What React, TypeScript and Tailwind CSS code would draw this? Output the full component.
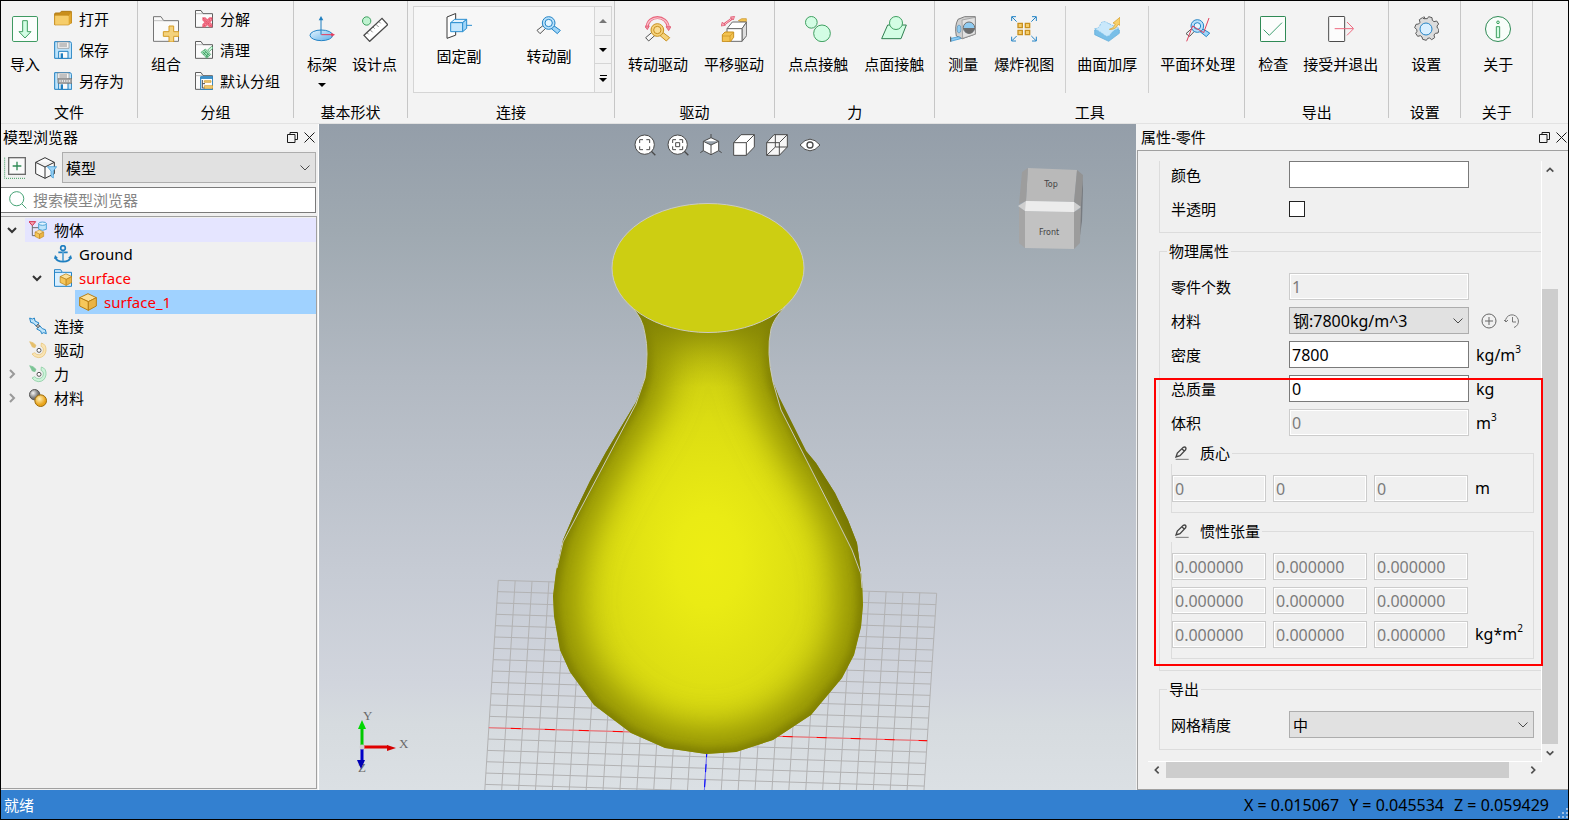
import { useState, type ReactNode } from "react";
import clsx from "clsx";

/* ---------- icons ---------- */

function Icon({ size = 78, className, children }: { size?: number; className: string; children: ReactNode }) {
  return (
    <svg viewBox={`0 0 ${size} ${size}`} className={clsx("shrink-0", className)} fill="none" strokeWidth={3} aria-hidden>
      {children}
    </svg>
  );
}

const BIG = "size-[26px]";
const SMALL = "size-[18px]";

function ImportIcon() {
  return (
    <Icon className={BIG}>
      <rect x="1.5" y="1.5" width="75" height="75" rx="4" fill="#fbfdfc" stroke="#3f9a62" />
      <path d="M32 14h14v33h11L39 66 21 47h11z" fill="#d3fde4" stroke="#3f9f60" />
    </Icon>
  );
}

function OpenIcon() {
  return (
    <Icon size={54} className={SMALL}>
      <path d="M2 44V12q0-3 3-3h12l5-5h28q3 0 3 3v32z" fill="#c98f1c" stroke="#b17b14" />
      <path d="M2 18q0-2 3-2h35q3 0 4 2l7-10v30l-7 7H4q-2 0-2-3z" fill="#f6cd6a" stroke="#c8901f" strokeWidth="2" />
      <path d="M44 18v27l8-7V8z" fill="#e0a62e" />
    </Icon>
  );
}

function Floppy({ children }: { children?: ReactNode }) {
  return (
    <Icon size={54} className={SMALL}>
      <path d="M2 2h47l4 5v45H2z" fill="#bde3fb" stroke="#1f7fc0" />
      <path d="M11 3h34v19H11z" fill="#f5f5f5" stroke="#8a8a8a" strokeWidth="2" />
      <path d="M16 9h23M16 15h23" stroke="#8d8d8d" />
      <path d="M14 31h28v21H14z" fill="#fafafa" stroke="#1f7fc0" />
      <path d="M20 37h7v14h-7z" fill="#1f7fc0" />
      {children}
    </Icon>
  );
}

function SaveAsIcon() {
  return (
    <Floppy>
      <path d="M12 20h42v14H12z" fill="#a9a9a9" stroke="#6b6b6b" strokeWidth="2" />
      <path d="M18 24v6M25 24v6M32 24v6M39 24v6M46 24v6" stroke="#efefef" />
    </Floppy>
  );
}

function GroupIcon() {
  return (
    <Icon className={BIG}>
      <path d="M1.5 76V2H24l8 12h44.5v62z" fill="#fafafa" stroke="#757575" />
      <path d="M2 14h30" stroke="#a8a8a8" strokeWidth="2" />
      <path d="M48 30h14v17h16v14H62v17H48V61H31V47h17z" fill="#f4d27c" stroke="#d39a24" />
    </Icon>
  );
}

function SmallFolder({ children }: { children: ReactNode }) {
  return (
    <Icon size={54} className={SMALL}>
      <path d="M1.5 52V1.5H18L24 11h28.5v41z" fill="#fbfbfb" stroke="#5e5e5e" />
      <path d="M2 11h22" stroke="#9c9c9c" strokeWidth="2" />
      {children}
    </Icon>
  );
}

function UngroupIcon() {
  return (
    <SmallFolder>
      <path d="M22 22h9l6 6 6-6h9v9l-6 6 6 6v9h-9l-6-6-6 6h-9v-9l6-6-6-6z" fill="#f0697f" />
      <path d="M27 26l21 21M48 26L27 47" stroke="#fbb3be" strokeDasharray="3 3" />
      <path d="M24 24l26 26M50 24L24 50" stroke="#d32f4c" strokeWidth="2" strokeDasharray="4 3" />
    </SmallFolder>
  );
}

function CleanIcon() {
  return (
    <SmallFolder>
      <path d="M50 16l4 5-11 11-5-5z" fill="#c9f4d8" stroke="#3f9f60" strokeWidth="2" />
      <path d="M31 24l16 16-11 12L18 34z" fill="#9be0b5" stroke="#3f9f60" strokeWidth="2" />
      <path d="M24 33l15 15M28 28l16 16M33 50l6-12M25 42l7-9" stroke="#2f8a52" strokeWidth="2" />
    </SmallFolder>
  );
}

function DefaultGroupIcon() {
  return (
    <SmallFolder>
      <path d="M17 14h36v38H17z" fill="#fff" stroke="#1f7fc0" />
      <path d="M17 18h36" stroke="#1f7fc0" strokeWidth="5" />
      <path d="M22 24v24M22 35h8M22 48h8" stroke="#4f4f4f" />
      <path d="M28 26h20v5H28zM28 41h26v8H28z" fill="#f4cf73" stroke="#c8901f" strokeWidth="2" />
    </SmallFolder>
  );
}

function FrameIcon() {
  return (
    <Icon className={BIG}>
      <defs>
        <linearGradient id="disc" x1="0" y1="0" x2="1" y2="1">
          <stop stopColor="#e6f5ff" />
          <stop offset="1" stopColor="#5fb0e8" />
        </linearGradient>
      </defs>
      <ellipse cx="37" cy="58" rx="34" ry="16" fill="url(#disc)" stroke="#2484c6" />
      <path d="M36 56V8" stroke="#1f7fc0" />
      <path d="M36 0l7 13H29z" fill="#1f7fc0" />
      <path d="M37 56h32" stroke="#e83a5a" />
      <path d="M78 56l-11-6v12z" fill="#e83a5a" />
    </Icon>
  );
}

function DesignPointIcon() {
  return (
    <Icon className={BIG}>
      <circle cx="14" cy="15" r="12.5" fill="#bff2d0" stroke="#3f9f60" />
      <path d="M6 58L60 7l17 19-54 50z" fill="#fff" stroke="#4a4a4a" strokeWidth="4" />
      <path d="M15 50l5 5M24 41l8 8M33 33l5 5M42 25l8 8M51 17l5 5" stroke="#4a4a4a" strokeWidth="2" />
    </Icon>
  );
}

function FixedJointIcon() {
  return (
    <Icon className={BIG}>
      <path d="M3 12L29 1.500v65L3 76z" fill="#fff" stroke="#3a3a3a" />
      <path d="M14 29l12-10h36L50 29z" fill="#e2f3ff" stroke="#2b8fd0" />
      <path d="M14 29h36v27H14z" fill="#c5e7fd" stroke="#2b8fd0" />
      <path d="M50 29l12-10v27L50 56z" fill="#9fd5f8" stroke="#2b8fd0" />
      <path d="M62 37h16" stroke="#2b8fd0" />
    </Icon>
  );
}

function RevoluteIcon() {
  return (
    <Icon className={BIG}>
      <path d="M22 37l8 8-18 17-9-10z" fill="#f7f7f7" stroke="#555" />
      <path d="M52 37l-8 8 20 17 9-10z" fill="#9fd5f8" stroke="#2484c6" />
      <circle cx="38" cy="30" r="19" fill="#b9e1fb" stroke="#2484c6" />
      <circle cx="38" cy="30" r="11" fill="#e5f5ff" stroke="#2484c6" />
    </Icon>
  );
}

function RotateDriveIcon() {
  return (
    <Icon className={BIG}>
      <path d="M6 36C7-6 67-6 70 36" stroke="#e8657c" strokeWidth="9" />
      <path d="M6 34C8-4 66-4 70 34" stroke="#fbc0ca" strokeWidth="4" />
      <path d="M-1 30h14l-6 11zM63 32h15l-7 12z" fill="#ef8a9b" stroke="#e04f69" strokeWidth="2" />
      <path d="M22 48l9 9-20 18-9-10z" fill="#f7f7f7" stroke="#555" />
      <path d="M52 48l-9 9 21 18 10-10z" fill="#f6d27a" stroke="#c8901f" />
      <circle cx="37" cy="42" r="19" fill="#f6d27a" stroke="#c8901f" />
      <circle cx="37" cy="42" r="11" fill="#f9dd95" stroke="#c8901f" />
    </Icon>
  );
}

function SlideDriveIcon() {
  return (
    <Icon className={BIG}>
      <path d="M52 14l10-6h14v9H60z" fill="#f2c24f" stroke="#c8901f" strokeWidth="2" />
      <path d="M18 38l16-20h43L63 38z" fill="#fff" stroke="#6a6a6a" />
      <path d="M63 38l14-20v41L63 76z" fill="#dedede" stroke="#6a6a6a" />
      <path d="M18 38h45v38H18z" fill="#fff" stroke="#6a6a6a" />
      <path d="M4 56l8-8h26v16l-10 13H4z" fill="#f2c24f" stroke="#c8901f" />
      <path d="M4 60h23v16M27 60l10-11" stroke="#c8901f" strokeWidth="2" />
      <path d="M8 26L34 7" stroke="#e04f69" strokeWidth="7" />
      <path d="M10 25L32 8" stroke="#fbc0ca" />
      <path d="M0 30l4-12 9 10zM41 1L28 3l9 9z" fill="#f5a3b1" stroke="#e04f69" strokeWidth="2" />
    </Icon>
  );
}

function PointPointIcon() {
  return (
    <Icon className={BIG}>
      <circle cx="19" cy="19" r="17.500" fill="#d3fde4" stroke="#3f9f60" />
      <circle cx="51" cy="52" r="25" fill="#d3fde4" stroke="#3f9f60" />
    </Icon>
  );
}

function PointFaceIcon() {
  return (
    <Icon className={BIG}>
      <path d="M20 27h56L60 68H2z" fill="#d3fde4" stroke="#2f7f4f" />
      <circle cx="45" cy="21" r="19.500" fill="#d3fde4" stroke="#3f9f60" />
    </Icon>
  );
}

function MeasureIcon() {
  return (
    <Icon className={BIG}>
      <path d="M24 10l20-8h32l1 52-40 14-18-8q-6-30 5-50z" fill="#cfcfcf" stroke="#7c7c7c" />
      <path d="M36 12l40-8v50L38 67z" fill="#e2e2e2" stroke="#8c8c8c" strokeWidth="2" />
      <circle cx="57" cy="35" r="17" fill="#8fcbf1" stroke="#6f6f6f" />
      <path d="M41 36h33q-2 16-17 17-14-2-16-17z" fill="#6d6d6d" />
      <ellipse cx="27" cy="39" rx="6" ry="12" fill="#8fcbf1" stroke="#5f8fb0" strokeWidth="2" />
      <path d="M2 76v-9l26-5 4 6z" fill="#8fcbf1" stroke="#2b8fd0" strokeWidth="2" />
      <path d="M2 62v15" stroke="#555" />
    </Icon>
  );
}

function ExplodeIcon() {
  return (
    <Icon className={BIG}>
      <path
        d="M17 17L3 3M61 17L75 3M17 60L3 74M61 60l14 14M2 15V2h13M63 2h13v13M2 62v13h13M63 75h13V62"
        stroke="#2484c6"
      />
      <path d="M21 22h13v13H21zM43 22h13v13H43zM21 43h13v13H21zM43 43h13v13H43z" fill="#f6cd6a" stroke="#c8901f" strokeWidth="4" />
    </Icon>
  );
}

function ThickenIcon() {
  return (
    <Icon className={BIG}>
      <path d="M2 42l40-20 34 20v10L44 76 2 56z" fill="#79bfe8" stroke="#5aa9d8" strokeWidth="2" />
      <path d="M2 38q14 0 18-16 4-6 14-5 22 12 42 20-18 4-28 20-6 6-14 2Q20 48 2 38z" fill="#c9e8fb" stroke="#6fb7e2" strokeWidth="2" strokeDasharray="6 3" />
      <path d="M46 40q14-2 18-16l-7-3L78 4v24l-6-3Q66 42 46 40z" fill="#f8d06a" stroke="#d39a24" strokeWidth="2" />
    </Icon>
  );
}

function PlaneLoopIcon() {
  return (
    <Icon className={BIG}>
      <path d="M20 38l8 8-14 15-11-8z" fill="#f2f2f2" stroke="#555" />
      <path d="M52 38l-8 8 20 16 10-11z" fill="#9fd5f8" stroke="#2484c6" />
      <circle cx="37" cy="30" r="19" fill="#b9e1fb" stroke="#2484c6" />
      <circle cx="37" cy="30" r="10" fill="#e5f5ff" stroke="#2484c6" />
      <path d="M5 76l18-46 33 20L72 6" stroke="#e0405c" />
    </Icon>
  );
}

function CheckIcon() {
  return (
    <Icon className={BIG}>
      <rect x="1.500" y="1.500" width="75" height="75" rx="2" fill="#fcfdfc" stroke="#2f8a55" />
      <path d="M11 41l17 17 38-38" stroke="#3f9f70" />
    </Icon>
  );
}

function AcceptIcon() {
  return (
    <Icon className={BIG}>
      <rect x="2" y="1.500" width="48" height="75" rx="2" fill="#fcfcfc" stroke="#4b4b4b" />
      <path d="M20 38h55M57 18l20 20-20 20" stroke="#ef6a80" strokeWidth="3" />
    </Icon>
  );
}

function GearIcon() {
  return (
    <Icon className={BIG}>
      <path
        d="M33 2l3 6h7l4-6 10 3 1 8 5 4 8-2 6 9-5 6 1 6 5 5-3 10-8 1-4 5 2 8-9 6-6-5-6 1-4 6-11-3-2-7-5-4-8 2-6-9 4-6-1-6-6-5 4-10 8-1 4-5-2-8 9-6 6 4z"
        fill="#dcdcdc"
        stroke="#5a5a5a"
        strokeLinejoin="round"
      />
      <circle cx="39" cy="39" r="18" fill="#d9efff" stroke="#2484c6" />
    </Icon>
  );
}

function AboutIcon() {
  return (
    <Icon className={BIG}>
      <circle cx="39" cy="39" r="37.500" fill="#f8fdfa" stroke="#2f8a55" />
      <circle cx="39" cy="19" r="4" fill="#d3fde4" stroke="#3f9f60" />
      <path d="M34 32h10v33H34z" fill="#d3fde4" stroke="#3f9f60" />
    </Icon>
  );
}

function FloatIcon() {
  return (
    <svg viewBox="0 0 11 11" className="size-[11px]" fill="none" stroke="#1a1a1a">
      <path d="M3 2.500V.5h7.500v7H8M.5 2.500H8v8H.5z" />
    </svg>
  );
}

function CloseIcon() {
  return (
    <svg viewBox="0 0 11 11" className="size-[11px]" fill="none" stroke="#1a1a1a">
      <path d="M.5.5l10 10M10.500.5l-10 10" />
    </svg>
  );
}

function Chevron({ dir, className }: { dir: "up" | "down" | "left" | "right"; className: string }) {
  const d = {
    up: "M2 8l4-4 4 4",
    down: "M2 4l4 4 4-4",
    left: "M8 2L4 6l4 4",
    right: "M4 2l4 4-4 4",
  }[dir];
  return (
    <svg viewBox="0 0 12 12" className={className} fill="none" stroke="currentColor" strokeWidth={2}>
      <path d={d} />
    </svg>
  );
}

function SelectArrow() {
  return (
    <svg viewBox="0 0 10 6" className="pointer-events-none absolute top-1/2 right-[6px] h-[6px] w-[10px] -translate-y-1/2" fill="none" stroke="#4a4a4a">
      <path d="M.5.5L5 5 9.500.5" />
    </svg>
  );
}

function PencilIcon() {
  return (
    <svg viewBox="0 0 42 42" className="size-[14px]" fill="none" stroke="#444" strokeWidth={4}>
      <path d="M3 33l4-12L25 4q5-3 8 2l-1 5-17 18zM21 9l8 7" />
      <path d="M2 40h39" stroke="#777" strokeWidth="3" />
    </svg>
  );
}

function Cube({ x = 0, y = 0, s = 1 }: { x?: number; y?: number; s?: number }) {
  return (
    <g transform={`translate(${x} ${y}) scale(${s})`} stroke="#b97f12" strokeLinejoin="round">
      <path d="M2 14L27 2l25 12-24 12z" fill="#fbe09a" />
      <path d="M2 14l26 12v26L2 39z" fill="#f6c75a" />
      <path d="M52 14L28 26v26l24-13z" fill="#eab445" />
    </g>
  );
}

function BodiesIcon() {
  return (
    <Icon size={54} className={SMALL}>
      <path d="M0 2h20L10 14z" fill="#f6a5b2" stroke="#d32f4c" />
      <path d="M10 14v30h10M10 20h20" stroke="#6b6b6b" />
      <path d="M29 8v17q11 6 23 0V8z" fill="#bfe4fa" stroke="#4fa3d8" />
      <ellipse cx="40.500" cy="8" rx="11.500" ry="5" fill="#e2f3ff" stroke="#4fa3d8" />
      <Cube x={17} y={26} s={0.52} />
    </Icon>
  );
}

function AnchorIcon() {
  return (
    <Icon size={54} className={SMALL}>
      <circle cx="27" cy="9" r="7" stroke="#1f7fc0" strokeWidth="5" />
      <path d="M27 16v34M13 22h28M4 36q3 14 23 14t23-14" stroke="#1f7fc0" strokeWidth="5" />
      <path d="M0 42l3-12 9 9zM54 42l-3-12-9 9z" fill="#1f7fc0" />
      <path d="M27 18v30" stroke="#bfe4fa" strokeWidth="2" />
    </Icon>
  );
}

function PartFolderIcon() {
  return (
    <Icon size={54} className={SMALL}>
      <path d="M1.500 52V2H20l5 8h27.500v42z" fill="#d9efff" stroke="#2484c6" />
      <path d="M2 10h22" stroke="#2484c6" />
      <Cube x={17} y={13} s={0.7} />
    </Icon>
  );
}

function PartIcon() {
  return (
    <Icon size={54} className={SMALL}>
      <Cube />
    </Icon>
  );
}

function JointsIcon() {
  return (
    <Icon size={54} className={SMALL}>
      <path d="M2 3l8 3 6-3 2 9 12 6-8 10-8-9-9-3z" fill="#bfe4fa" stroke="#2484c6" />
      <path d="M52 50l-8-3-6 3-3-8-12-6 9-10 8 9 9 3z" fill="#bfe4fa" stroke="#2484c6" />
      <circle cx="27" cy="27" r="4" fill="#fff" stroke="#555" />
    </Icon>
  );
}

function SwirlIcon({ fill, edge }: { fill: string; edge: string }) {
  return (
    <Icon size={54} className={SMALL}>
      <path d="M2 2l10 3 9 8-3 7-8-2z" fill={edge} stroke={edge} strokeWidth="2" />
      <path d="M37 6q16 4 14 24-4 20-23 20-12-1-19-11l8-4q6 8 15 6 12-4 11-17-1-6-7-8z" fill={fill} stroke={edge} strokeWidth="2" />
      <circle cx="30" cy="28" r="6" fill="#fff" stroke="#555" />
    </Icon>
  );
}

function MaterialIcon() {
  return (
    <Icon size={54} className={SMALL}>
      <defs>
        <radialGradient id="mat-grey" cx=".35" cy=".35">
          <stop stopColor="#f5f5f5" />
          <stop offset="1" stopColor="#6f6f6f" />
        </radialGradient>
        <radialGradient id="mat-gold" cx=".4" cy=".35">
          <stop stopColor="#fff0b8" />
          <stop offset="1" stopColor="#e9a51d" />
        </radialGradient>
      </defs>
      <circle cx="17" cy="17" r="15.500" fill="url(#mat-grey)" stroke="#555" />
      <circle cx="35" cy="35" r="17.500" fill="url(#mat-gold)" stroke="#9c6a08" />
    </Icon>
  );
}

/* ---------- ribbon ---------- */

interface Action {
  label: string;
  icon: ReactNode;
}

function BigButton({ label, icon, arrow }: Action & { arrow?: boolean }) {
  return (
    <button type="button" className="flex flex-col items-center self-start pt-[13px]">
      {icon}
      <span className="mt-[11px] leading-[22px] whitespace-nowrap">{label}</span>
      {arrow && <span className="mt-[8px] border-x-4 border-t-4 border-x-transparent border-t-black" />}
    </button>
  );
}

function SmallButtons({ items }: { items: Action[] }) {
  return (
    <div className="flex flex-col">
      {items.map((item) => (
        <button key={item.label} type="button" className="flex h-[31px] items-center gap-[7px] whitespace-nowrap">
          {item.icon}
          {item.label}
        </button>
      ))}
    </div>
  );
}

function RibbonGroup({ title, className, children }: { title: string; className: string; children: ReactNode }) {
  return (
    <section className="flex shrink-0">
      <div>
        <div className={clsx("flex h-[100px] pt-[2px]", className)}>{children}</div>
        <h2 className="text-center leading-[22px]">{title}</h2>
      </div>
      <div className="h-[117px] w-px bg-[#c6c6c6]" />
    </section>
  );
}

function InnerRule() {
  return <div className="-mx-[5px] mt-[3px] h-[87px] w-px bg-[#cfcfcf]" />;
}

function JointGallery() {
  return (
    <div className="mt-[3px] flex h-[87px] border border-[#d5d5d5] bg-[#f7f7f7]">
      {[
        { label: "固定副", icon: <FixedJointIcon /> },
        { label: "转动副", icon: <RevoluteIcon /> },
      ].map((j) => (
        <button key={j.label} type="button" className="flex w-[90px] flex-col items-center pt-[6px]">
          {j.icon}
          <span className="mt-[6px] leading-[22px]">{j.label}</span>
        </button>
      ))}
      <div className="flex w-[17px] flex-col divide-y divide-[#d5d5d5] border-l border-[#d5d5d5] bg-[#f3f3f3]">
        <button type="button" aria-label="上一行" className="flex flex-1 items-center justify-center">
          <span className="border-x-4 border-b-4 border-x-transparent border-b-[#777]" />
        </button>
        <button type="button" aria-label="下一行" className="flex flex-1 items-center justify-center">
          <span className="border-x-4 border-t-4 border-x-transparent border-t-black" />
        </button>
        <button type="button" aria-label="更多" className="flex flex-1 flex-col items-center justify-center gap-[2px]">
          <span className="h-px w-[7px] bg-black" />
          <span className="border-x-4 border-t-4 border-x-transparent border-t-black" />
        </button>
      </div>
    </div>
  );
}

function Ribbon() {
  return (
    <header className="flex h-[123px] overflow-hidden border-b border-[#e2e2e2] bg-[#f3f3f3]">
      <RibbonGroup title="文件" className="gap-[14px] pr-[13px] pl-[9px]">
        <BigButton label="导入" icon={<ImportIcon />} />
        <SmallButtons
          items={[
            { label: "打开", icon: <OpenIcon /> },
            { label: "保存", icon: <Floppy /> },
            { label: "另存为", icon: <SaveAsIcon /> },
          ]}
        />
      </RibbonGroup>
      <RibbonGroup title="分组" className="gap-[14px] px-[13px]">
        <BigButton label="组合" icon={<GroupIcon />} />
        <SmallButtons
          items={[
            { label: "分解", icon: <UngroupIcon /> },
            { label: "清理", icon: <CleanIcon /> },
            { label: "默认分组", icon: <DefaultGroupIcon /> },
          ]}
        />
      </RibbonGroup>
      <RibbonGroup title="基本形状" className="gap-[15px] pr-[10px] pl-[13px]">
        <BigButton label="标架" icon={<FrameIcon />} arrow />
        <BigButton label="设计点" icon={<DesignPointIcon />} />
      </RibbonGroup>
      <RibbonGroup title="连接" className="pr-[2px] pl-[5px]">
        <JointGallery />
      </RibbonGroup>
      <RibbonGroup title="驱动" className="gap-[16px] pr-[10px] pl-[13px]">
        <BigButton label="转动驱动" icon={<RotateDriveIcon />} />
        <BigButton label="平移驱动" icon={<SlideDriveIcon />} />
      </RibbonGroup>
      <RibbonGroup title="力" className="gap-[16px] pr-[10px] pl-[13px]">
        <BigButton label="点点接触" icon={<PointPointIcon />} />
        <BigButton label="点面接触" icon={<PointFaceIcon />} />
      </RibbonGroup>
      <RibbonGroup title="工具" className="gap-[16px] pr-[9px] pl-[13px]">
        <BigButton label="测量" icon={<MeasureIcon />} />
        <BigButton label="爆炸视图" icon={<ExplodeIcon />} />
        <InnerRule />
        <BigButton label="曲面加厚" icon={<ThickenIcon />} />
        <InnerRule />
        <BigButton label="平面环处理" icon={<PlaneLoopIcon />} />
      </RibbonGroup>
      <RibbonGroup title="导出" className="gap-[15px] pr-[10px] pl-[13px]">
        <BigButton label="检查" icon={<CheckIcon />} />
        <BigButton label="接受并退出" icon={<AcceptIcon />} />
      </RibbonGroup>
      <RibbonGroup title="设置" className="pr-[19px] pl-[22px]">
        <BigButton label="设置" icon={<GearIcon />} />
      </RibbonGroup>
      <RibbonGroup title="关于" className="pr-[19px] pl-[22px]">
        <BigButton label="关于" icon={<AboutIcon />} />
      </RibbonGroup>
    </header>
  );
}

/* ---------- model browser ---------- */

function PanelTitle({ title, className }: { title: string; className: string }) {
  return (
    <div className={clsx("flex h-[26px] shrink-0 items-center gap-[6px] bg-[#f3f3f3]", className)}>
      <h2 className="flex-1">{title}</h2>
      <button type="button" aria-label="浮动">
        <FloatIcon />
      </button>
      <button type="button" aria-label="关闭">
        <CloseIcon />
      </button>
    </div>
  );
}

interface TreeNode {
  label: string;
  icon: ReactNode;
  level: 0 | 1 | 2;
  open?: boolean;
  error?: boolean;
}

const TREE: TreeNode[] = [
  { label: "物体", icon: <BodiesIcon />, level: 0, open: true },
  { label: "Ground", icon: <AnchorIcon />, level: 1 },
  { label: "surface", icon: <PartFolderIcon />, level: 1, open: true, error: true },
  { label: "surface_1", icon: <PartIcon />, level: 2, error: true },
  { label: "连接", icon: <JointsIcon />, level: 0 },
  { label: "驱动", icon: <SwirlIcon fill="#f9e4b4" edge="#e5bf6c" />, level: 0 },
  { label: "力", icon: <SwirlIcon fill="#cdf3da" edge="#7cc596" />, level: 0, open: false },
  { label: "材料", icon: <MaterialIcon />, level: 0, open: false },
];

const INDENT = ["pl-0", "pl-[25px]", "pl-[50px]"];

function ModelBrowser() {
  const [selected, setSelected] = useState("surface_1");

  return (
    <aside className="flex w-[318px] shrink-0 flex-col border-r border-white bg-[#f0f0f0] pb-px">
      <PanelTitle title="模型浏览器" className="pr-[3px] pl-[2px]" />
      <div className="mt-[2px] mr-[2px] flex h-[31px] shrink-0 items-center">
        <button type="button" aria-label="添加" className="ml-[3px]">
          <svg viewBox="0 0 66 66" className="size-[22px]" fill="none" strokeWidth={3}>
            <path d="M2 2v62h64" stroke="#3f9f60" strokeDasharray="3 3" />
            <rect x="14" y="2" width="50" height="50" fill="#fafafa" stroke="#6b6b6b" strokeWidth="4" />
            <path d="M39 14v26M26 27h26" stroke="#2f8a55" strokeWidth="4" />
          </svg>
        </button>
        <button type="button" aria-label="过滤" className="mr-[5px] ml-[9px]">
          <svg viewBox="0 0 66 66" className="size-[22px]" fill="none" strokeWidth={3}>
            <path d="M2 16L30 2l28 14v34L30 64 2 50zM2 16l28 14 28-14M30 30v34" fill="#fafafa" stroke="#333" />
            <path d="M37 29h28L55 42v21l-7-5V42z" fill="#9fd5f8" stroke="#2b8fd0" strokeWidth="2" />
          </svg>
        </button>
        <div className="relative h-full flex-1">
          <select aria-label="模型" className="h-full w-full appearance-none border border-[#adadad] bg-[#e1e1e1] pl-[3px]">
            <option>模型</option>
          </select>
          <SelectArrow />
        </div>
      </div>
      <div className="relative mt-[4px] mr-[2px] shrink-0">
        <svg viewBox="0 0 56 56" className="absolute top-[4px] left-[8px] size-[18px]" fill="none" stroke="#3f9f70" strokeWidth={3}>
          <circle cx="24" cy="24" r="22" />
          <path d="M40 40l14 14" />
        </svg>
        <input
          aria-label="搜索"
          placeholder="搜索模型浏览器"
          className="h-[26px] w-full border border-l-0 border-[#7a7a7a] bg-white pl-[32px] placeholder:text-[#858585]"
        />
      </div>
      <ul className="mt-[3px] mr-[1px] flex-1 border-t border-r border-b border-[#a0a0a0] pt-px">
        {TREE.map((node) => (
          <li key={node.label} className={clsx("flex h-6", INDENT[node.level])}>
            <span className="flex w-6 shrink-0 items-center justify-center pr-[3px]">
              {node.open !== undefined && (
                <Chevron
                  dir={node.open ? "down" : "right"}
                  className={clsx("size-3 shrink-0", node.open ? "text-[#333]" : "text-[#999]")}
                />
              )}
            </span>
            <button
              type="button"
              onClick={() => setSelected(node.label)}
              className={clsx(
                "flex flex-1 items-center gap-[7px] pl-[4px]",
                selected === node.label ? "bg-[#a0d2ff]" : node.label === "物体" && "bg-[#e5e5ff]",
                node.error && "text-[#ff0000]",
              )}
            >
              {node.icon}
              {node.label}
            </button>
          </li>
        ))}
      </ul>
    </aside>
  );
}

/* ---------- 3D view ---------- */

const VASE =
  "M631 306Q643 318 645 334Q649 352 645 378L636 402L606 452L590 481L575 512L563 540L556 572L553 596L554 616L560 650L570 672L594 705L631 733L665 748L706 754L736 752L773 740L811 715L842 678L854 655L861 627L863 605L862 580L857 543L848 520L835 493L816 463L806 451L779 397L773 382Q766 352 771 329Q774 318 785 307Z";

// 26 x 26 floor cells; each step along a row also drops slightly
const GRID_STEPS = Array.from({ length: 27 }, (_, i) => i);

function gridPoint(col: number, row: number) {
  return `${498.3 + 16.86 * col - 0.73 * row} ${580.3 + 0.5 * col + 11.34 * row}`;
}

function Scene() {
  return (
    <svg viewBox="319 124 817 666" preserveAspectRatio="xMidYMid slice" className="absolute inset-0 size-full" fill="none">
      <defs>
        <clipPath id="vase">
          <path d={VASE} />
        </clipPath>
        <filter id="soft" x="-20%" y="-20%" width="140%" height="140%">
          <feGaussianBlur stdDeviation="19" />
        </filter>
        <filter id="tight" x="-20%" y="-20%" width="140%" height="140%">
          <feGaussianBlur stdDeviation="4" />
        </filter>
        <radialGradient id="shine" gradientUnits="userSpaceOnUse" cx="0" cy="0" r="1" gradientTransform="translate(708 560) scale(165 230)">
          <stop stopColor="#eded14" />
          <stop offset=".2" stopColor="#eaeb14" />
          <stop offset=".6" stopColor="#dcdd12" />
          <stop offset="1" stopColor="#c6c710" />
        </radialGradient>
        <linearGradient id="neck" x1="0" y1="0" x2="0" y2="1">
          <stop stopColor="#7c7d05" stopOpacity=".8" />
          <stop offset="1" stopColor="#a0a009" stopOpacity="0" />
        </linearGradient>
      </defs>

      <path
        d={GRID_STEPS.map((n) => `M${gridPoint(n, 0)}L${gridPoint(n, 26)}M${gridPoint(0, n)}L${gridPoint(26, n)}`).join("")}
        stroke="#b2b2b3"
      />
      <path d={`M${gridPoint(0, 13)}L${gridPoint(26, 13)}`} stroke="#fa6a70" />
      <path d={`M${gridPoint(0, 13)}L${gridPoint(26, 13)}`} stroke="#f00" strokeDasharray="10 24" strokeDashoffset="12" />
      <path d={`M${gridPoint(13, 13)}L${gridPoint(13, 26)}`} stroke="#7474fa" />
      <path d={`M${gridPoint(13, 13)}L${gridPoint(13, 26)}`} stroke="#00f" strokeDasharray="8 7" />

      <g clipPath="url(#vase)">
        <path d={VASE} fill="url(#shine)" />
        <path d={VASE} stroke="#868606" strokeWidth="42" filter="url(#soft)" />
        <path d={VASE} stroke="#757505" strokeWidth="7" filter="url(#tight)" />
        <path d="M620 312h176v76H620z" fill="url(#neck)" />
        <path d="M636 402L563 542 556 572 540 560 600 430zM773 382L781 410 837 520 852 550 863 582 880 560 800 400z" fill="#6f7005" opacity=".55" />
      </g>
      <path d="M631 306Q643 318 645 334Q649 352 645 378L636 404L563 542 557 568M785 307Q774 318 771 329Q766 352 773 382L781 410 837 520 852 550 861 574 862 588" stroke="#cacabc" />
      <ellipse cx="708" cy="268" rx="96" ry="64.500" fill="#cdce12" stroke="#cbcbc4" />
    </svg>
  );
}

function ViewTools() {
  const tools: Action[] = [
    {
      label: "适合窗口",
      icon: (
        <>
          <circle cx="32" cy="32" r="29" fill="#fff" />
          <path d="M52 52l12 12" strokeWidth="4" />
          <path d="M17 27V17h10M37 17h10v10M47 37v10H37M27 47H17V37" />
        </>
      ),
    },
    {
      label: "缩放到选择",
      icon: (
        <>
          <circle cx="32" cy="32" r="29" fill="#fff" />
          <path d="M52 52l12 12" strokeWidth="4" />
          <path d="M17 27V17h10M37 17h10v10M47 37v10H37M27 47H17V37M26 26h12v12H26z" />
        </>
      ),
    },
    {
      label: "等轴测",
      icon: (
        <>
          <path d="M10 22l23-11 23 11v28L33 62 10 50zM10 22l23 11 23-11M33 33v29" fill="#fff" />
          <path d="M33 11V0M10 50L1 56M56 50l9 6" />
        </>
      ),
    },
    {
      label: "着色",
      icon: <path d="M2 26L24 2h40v37L40 64H2zM2 26h38v38M40 26L64 2" fill="#fff" />,
    },
    {
      label: "线框",
      icon: (
        <>
          <path d="M2 26L24 2h40v37L40 64H2z" fill="#f6f6f6" />
          <path d="M2 26h38v38M40 26L64 2M28 2v37h36M28 39L2 64" />
        </>
      ),
    },
    {
      label: "显示",
      icon: (
        <>
          <path d="M3 33q30-35 60 0-30 35-60 0z" fill="#fff" />
          <circle cx="33" cy="33" r="9" strokeWidth="4" />
        </>
      ),
    },
  ];

  return (
    <div className="absolute inset-x-0 top-[10px] flex justify-center gap-[11px] pr-px">
      {tools.map((t) => (
        <button key={t.label} type="button" aria-label={t.label}>
          <svg viewBox="0 0 66 66" className="size-[22px]" fill="none" stroke="#4a4a4a" strokeWidth={3}>
            {t.icon}
          </svg>
        </button>
      ))}
    </div>
  );
}

function ViewCube() {
  return (
    <svg viewBox="0 0 67 82" className="absolute top-[44px] right-[51px] h-[82px] w-[67px]">
      <path d="M64 7l1 14-1 32-3 22z" fill="#777b80" />
      <path d="M10 0l49 2-3 32-48-1z" fill="#b9b9b9" />
      <path d="M10 0L4 4 1 36l7-3z" fill="#9d9d9d" />
      <path d="M59 2l6 5-2 32-7-5z" fill="#939393" />
      <path d="M7 43l49 1v37l-49-1z" fill="#c2c2c2" />
      <path d="M1 39l6 4v37l-6-5z" fill="#a5a5a5" />
      <path d="M56 44l7-4-1 35-6 6z" fill="#9c9c9c" />
      <path d="M0 38l8-5 48 1 7 5-7 5-49-1z" fill="#cfcfcf" />
      <path d="M8 33l48 1v10l-49-1z" fill="#ececec" />
      <text x="33" y="19" textAnchor="middle" fontSize="8" fill="#444" fontFamily="DejaVu Sans, sans-serif">
        Top
      </text>
      <text x="31" y="67" textAnchor="middle" fontSize="8" fill="#444" fontFamily="DejaVu Sans, sans-serif">
        Front
      </text>
    </svg>
  );
}

function AxisTriad() {
  return (
    <svg viewBox="0 -6 60 78" className="absolute bottom-[8px] left-[35px] h-[78px] w-[60px]" fontFamily="Liberation Serif, serif" fontSize="13" fill="#6a6a6a">
      <text x="9" y="10">Y</text>
      <text x="45" y="38">X</text>
      <text x="4" y="62">Z</text>
      <path d="M8 36V18" stroke="#00c800" strokeWidth="3" />
      <path d="M8 10l4 9H4z" fill="#00d800" />
      <path d="M9 37h25" stroke="#e00000" strokeWidth="3" />
      <path d="M42 38l-9 3v-6z" fill="#d40000" />
      <path d="M8 38v12" stroke="#0000c8" strokeWidth="3" />
      <path d="M7 59l-4-9h8z" fill="#0000b4" />
      <circle cx="8" cy="37" r="2.500" fill="#d0d0d0" />
    </svg>
  );
}

function Viewport() {
  return (
    <main className="relative min-w-0 flex-1 overflow-hidden bg-linear-[to_bottom,#949ea9,#9fa9b1_16%,#b2b9c2_38%,#c6cbd4_67%,#d1d5dd_84%,#d6dbdf_90%,#dbe0e4]">
      <Scene />
      <ViewTools />
      <ViewCube />
      <AxisTriad />
    </main>
  );
}

/* ---------- properties ---------- */

const FIELD = "h-[27px] min-w-0 border border-[#7a7a7a] bg-white pl-[2px] text-base";
const FIELD_OFF =
  "h-[27px] min-w-0 border border-[#cccccc] bg-[#f0f0f0] pl-[2px] text-base text-[#7c7c7c] shadow-[inset_0_0_0_1px_white]";
const COMBO = "h-[27px] w-full appearance-none border border-[#adadad] bg-[#e1e1e1] pl-[3px]";

function Row({ id, label, unit, children }: { id: string; label: string; unit?: ReactNode; children: ReactNode }) {
  return (
    <div className="flex h-[27px] items-center">
      <label htmlFor={id} className="w-[118px] shrink-0">
        {label}
      </label>
      {children}
      {unit && <span className="ml-[7px] text-base leading-5">{unit}</span>}
    </div>
  );
}

function Sup({ children }: { children: ReactNode }) {
  return <sup className="-top-[8px] text-[10px]">{children}</sup>;
}

function Section({ title, children }: { title: string; children: ReactNode }) {
  return (
    <fieldset className="mt-[7px] ml-[11px] min-w-0 border border-r-0 border-[#dcdcdc] pt-[11px] pr-[7px] pb-[11px] pl-[11px]">
      <legend className="-ml-[4px] px-[2px] leading-[22px]">{title}</legend>
      {children}
    </fieldset>
  );
}

function MatrixBox({ title, values, unit }: { title: string; values: string[]; unit: ReactNode }) {
  return (
    <fieldset className="min-w-0 border border-[#dcdcdc] pt-[11px] pb-[10px]">
      <legend className="-ml-px flex h-[22px] items-center bg-[#f0f0f0] pr-[2px] pl-[4px]">
        <button type="button" aria-label={`编辑${title}`}>
          <PencilIcon />
        </button>
        <span className="ml-[11px]">{title}</span>
      </legend>
      <div className="flex items-end">
        <div className="grid grid-cols-3 gap-[7px]">
          {values.map((v, i) => (
            <input key={i} aria-label={`${title} ${i + 1}`} disabled defaultValue={v} className={clsx(FIELD_OFF, "w-[94px]")} />
          ))}
        </div>
        <span className="ml-[7px] text-base leading-[27px]">{unit}</span>
      </div>
    </fieldset>
  );
}

function ScrollArrow({ dir }: { dir: "up" | "down" | "left" | "right" }) {
  const names = { up: "向上", down: "向下", left: "向左", right: "向右" };
  const vertical = dir === "up" || dir === "down";
  return (
    <button
      type="button"
      aria-label={names[dir]}
      className={clsx("flex shrink-0 items-center justify-center", vertical ? "h-[18px] w-4" : "h-4 w-[18px]")}
    >
      <Chevron dir={dir} className="size-[10px] text-[#505050]" />
    </button>
  );
}

function Properties() {
  return (
    <aside className="flex w-[432px] shrink-0 flex-col bg-[#f0f0f0]">
      <PanelTitle title="属性-零件" className="pr-px pl-[5px]" />
      <div className="relative ml-px grid min-h-0 flex-1 grid-cols-[1fr_16px] grid-rows-[1fr_16px] border-t border-b border-l border-[#a0a0a0] pt-[10px] pr-[10px] pb-[11px] pl-[10px]">
        <div className="min-h-0 overflow-hidden border-r border-b border-white">
          <div className="ml-[11px] border-b border-l border-[#dcdcdc] pb-[10px] pl-[11px]">
            <Row id="color" label="颜色">
              <input id="color" readOnly className={clsx(FIELD, "w-[180px]")} />
            </Row>
            <div className="mt-[7px]">
              <Row id="translucent" label="半透明">
                <input id="translucent" type="checkbox" className="size-4 appearance-none border border-[#222] bg-white checked:bg-[#3380d0]" />
              </Row>
            </div>
          </div>

          <Section title="物理属性">
            <div className="flex flex-col gap-[7px]">
              <Row id="count" label="零件个数">
                <input id="count" disabled defaultValue="1" className={clsx(FIELD_OFF, "w-[180px]")} />
              </Row>
              <Row id="material" label="材料">
                <div className="relative w-[180px]">
                  <select id="material" className={clsx(COMBO, "text-base")}>
                    <option>钢:7800kg/m^3</option>
                  </select>
                  <SelectArrow />
                </div>
                <button type="button" aria-label="新建材料" className="ml-[12px]">
                  <svg viewBox="0 0 16 16" className="size-4" fill="none" stroke="#666">
                    <circle cx="8" cy="8" r="7" />
                    <path d="M8 4v8M4 8h8" />
                  </svg>
                </button>
                <button type="button" aria-label="历史材料" className="ml-[7px]">
                  <svg viewBox="0 0 16 16" className="size-4" fill="none" stroke="#777">
                    <path d="M1.500 9a6.500 6.500 0 1 1 8.500 5.500M8.500 4v5H12M0 7l2 2 2-2" />
                  </svg>
                </button>
              </Row>
              <Row id="density" label="密度" unit={<>kg/m<Sup>3</Sup></>}>
                <input id="density" defaultValue="7800" className={clsx(FIELD, "w-[180px]")} />
              </Row>
              <Row id="mass" label="总质量" unit="kg">
                <input id="mass" defaultValue="0" className={clsx(FIELD, "w-[180px]")} />
              </Row>
              <Row id="volume" label="体积" unit={<>m<Sup>3</Sup></>}>
                <input id="volume" disabled defaultValue="0" className={clsx(FIELD_OFF, "w-[180px]")} />
              </Row>
            </div>
            <div className="mt-[6px] flex flex-col gap-[7px]">
              <MatrixBox title="质心" values={["0", "0", "0"]} unit="m" />
              <MatrixBox title="惯性张量" values={Array<string>(9).fill("0.000000")} unit={<>kg*m<Sup>2</Sup></>} />
            </div>
          </Section>

          <Section title="导出">
            <Row id="mesh" label="网格精度">
              <div className="relative flex-1">
                <select id="mesh" className={COMBO}>
                  <option>中</option>
                </select>
                <SelectArrow />
              </div>
            </Row>
          </Section>
        </div>

        <div className="flex min-h-0 flex-col">
          <ScrollArrow dir="up" />
          <div className="flex-[110]" />
          <div className="flex-[454] bg-[#cdcdcd]" />
          <ScrollArrow dir="down" />
        </div>
        <div className="flex items-center">
          <ScrollArrow dir="left" />
          <div className="h-full flex-[343] bg-[#cdcdcd]" />
          <div className="flex-[15]" />
          <ScrollArrow dir="right" />
        </div>

        {/* highlight around the mass properties */}
        <div className="pointer-events-none absolute top-[227px] right-[25px] left-[16px] h-[288px] border-2 border-[#ff0000]" />
      </div>
    </aside>
  );
}

/* ---------- window ---------- */

export default function App() {
  return (
    <div className="flex h-screen min-h-[820px] flex-col overflow-hidden border border-black bg-[#f0f0f0] font-['Noto_Sans','Noto_Sans_CJK_SC',sans-serif] text-[15px] leading-[22px] text-black">
      <Ribbon />
      <div className="flex min-h-0 flex-1">
        <ModelBrowser />
        <Viewport />
        <Properties />
      </div>
      <footer className="relative flex h-[29px] shrink-0 items-center justify-between bg-[#3380d0] pr-[19px] pl-[3px]">
        <span className="text-white">就绪</span>
        <span className="flex gap-[10px] text-base">
          <span>X = 0.015067</span>
          <span>Y = 0.045534</span>
          <span>Z = 0.059429</span>
        </span>
        <svg viewBox="0 0 10 10" className="absolute right-0 bottom-px size-[10px]" fill="#9dbfe6">
          <path d="M8 0h2v2H8zM4 4h2v2H4zM8 4h2v2H8zM0 8h2v2H0zM4 8h2v2H4zM8 8h2v2H8z" />
        </svg>
      </footer>
    </div>
  );
}
